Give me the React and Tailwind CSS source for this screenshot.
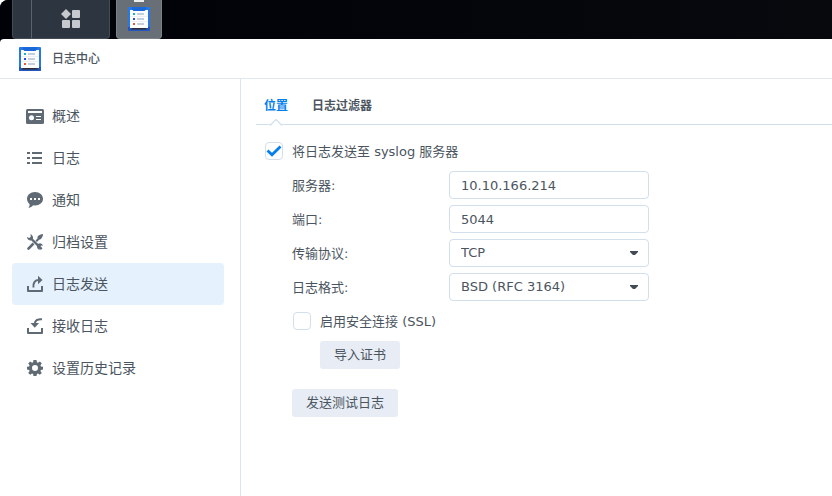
import { useState } from "react";

const navItems = [
  { id: "overview", label: "概述", Icon: OverviewIcon },
  { id: "logs", label: "日志", Icon: ListIcon },
  { id: "notification", label: "通知", Icon: ChatIcon },
  { id: "archive", label: "归档设置", Icon: ToolsIcon },
  { id: "sending", label: "日志发送", Icon: SendIcon },
  { id: "receiving", label: "接收日志", Icon: ReceiveIcon },
  { id: "history", label: "设置历史记录", Icon: GearIcon },
];

const tabs = [
  { id: "location", label: "位置" },
  { id: "filter", label: "日志过滤器" },
];

const fieldClass =
  "h-7 w-full rounded border border-[#d3dfea] bg-white px-[11px] text-[13px] text-[#4b5560] outline-none focus:border-[#057feb]";

function LogCenterIcon() {
  return (
    <svg className="h-6 w-[22px]" viewBox="0 0 22 24" aria-hidden="true">
      <rect width="22" height="24" rx="1" fill="#2478ea" />
      <path d="M0 20h22v3a1 1 0 0 1-1 1H1a1 1 0 0 1-1-1z" fill="#2456bd" />
      <rect x="2" y="3" width="18" height="18" fill="#fff" />
      <path d="M4 0h14v2.500l-1.500 1.500h-11L4 2.500z" fill="#1b68d8" />
      <path d="M4 21h14l1 1.500H3z" fill="#2c3036" />
      <path d="M2 9.500h18M2 14.500h18" stroke="#eef2f6" />
      <rect x="5" y="6" width="2" height="2" fill="#10b5c9" />
      <rect x="5" y="11" width="2" height="2" fill="#2f49ec" />
      <rect x="5" y="16" width="2" height="2" fill="#f2572b" />
      <path d="M9 7h7M9 12h7M9 17h7" stroke="#c4cfdd" strokeWidth="2" />
    </svg>
  );
}

function AppGridIcon() {
  return (
    <svg className="h-5 w-5" viewBox="0 0 20 20" fill="#c5c8cc" aria-hidden="true">
      <path d="M5 0l5 5-5 5-5-5z" />
      <rect x="11" y="1" width="8" height="8" rx="1" />
      <rect x="1" y="11" width="8" height="8" rx="1" />
      <rect x="11" y="11" width="8" height="8" rx="1" />
    </svg>
  );
}

function NavIcon({ children }) {
  return (
    <svg className="h-[18px] w-[18px] shrink-0 text-[#5f6a75]" viewBox="0 0 18 18" fill="currentColor" aria-hidden="true">
      {children}
    </svg>
  );
}

function OverviewIcon() {
  return (
    <NavIcon>
      <rect y="2" width="18" height="15" rx="1.500" />
      <g fill="#fff">
        <rect x="2" y="4" width="14" height="2" />
        <circle cx="5.500" cy="10.700" r="2.500" />
        <rect x="10" y="9" width="5" height="1" />
        <rect x="10" y="12" width="5" height="1" />
      </g>
    </NavIcon>
  );
}

function ListIcon() {
  return (
    <NavIcon>
      <path d="M1 3h3v2H1zM6 3h10v2H6zM1 8h3v2H1zM6 8h10v2H6zM1 13h3v2H1zM6 13h10v2H6z" />
    </NavIcon>
  );
}

function ChatIcon() {
  return (
    <NavIcon>
      <path d="M9 1c4.600 0 8 3 8 6.800s-3.400 6.700-8 6.700c-.7 0-1.300 0-1.900-.2C6 15.800 4.500 16.700 2.500 16.900c.8-1.100 1.200-2.400 1.100-3.700C2 12 1 10 1 7.800 1 4 4.400 1 9 1z" />
      <g fill="#fff">
        <rect x="4" y="7" width="2" height="2" />
        <rect x="8" y="7" width="2" height="2" />
        <rect x="12" y="7" width="2" height="2" />
      </g>
    </NavIcon>
  );
}

function ToolsIcon() {
  return (
    <NavIcon>
      <path d="M4.300 1.200a3.600 3.600 0 0 1 2.600 4.600l9.600 9.400-1.600 1.700-9.500-9.500A3.600 3.600 0 0 1 1 3.900l2.300 1.200 1.600-1.600z" />
      <path d="M11.500 3.800C13 2 15 1 17 1c0 2-1 4.200-2.800 5.600l-1.200.2-2 2.100-1.500-1.500 2-1.900z" />
      <path d="M6.600 9.600l1.800 1.800-5 5.100a1.300 1.300 0 0 1-1.900-1.800z" />
      <path d="M11.500 11l2.600-.8a3.500 3.500 0 0 1 2.900 2.600l-1.800-.3-1.700 1.700.4 2.600a3.500 3.500 0 0 1-2.900-3.300z" />
    </NavIcon>
  );
}

function SendIcon() {
  return (
    <NavIcon>
      <path d="M2 11v5h14v-5" fill="none" stroke="currentColor" strokeWidth="2" strokeLinejoin="round" />
      <path d="M12 .7L16.500 5 12 9.300z" />
      <path d="M7.500 12.500C7 7.500 9 5 13 5" fill="none" stroke="currentColor" strokeWidth="2" />
    </NavIcon>
  );
}

function ReceiveIcon() {
  return (
    <NavIcon>
      <path d="M2 11v5h14v-5" fill="none" stroke="currentColor" strokeWidth="2" strokeLinejoin="round" />
      <path d="M4.500 6h8.500L8.800 10.700z" />
      <path d="M16 2.200c-4.500-.3-7.200 1.300-7.200 5" fill="none" stroke="currentColor" strokeWidth="2" />
    </NavIcon>
  );
}

function GearIcon() {
  return (
    <NavIcon>
      <path
        fillRule="evenodd"
        d="M7.500 1h3l.4 2.200 1.100.5L13.900 2.400 15.800 4.400l-1.400 1.800.5 1.200 2.100.3v2.800l-2.100.4-.5 1.100 1.400 1.900-2 1.900-1.800-1.300-1.100.4-.4 2.100h-3l-.4-2.100-1.100-.4-1.800 1.300-2-1.900 1.400-1.900-.5-1.100L1 10.500V7.700l2.100-.3.500-1.200L2.200 4.400l2-2L6 3.700l1.100-.5zM9 6a3 3 0 1 0 0 6 3 3 0 0 0 0-6z"
      />
    </NavIcon>
  );
}

function Checkbox({ id, label, checked, onChange }) {
  return (
    <div className="flex h-7 items-center gap-[9px]">
      <span className="relative ml-px flex h-[18px] w-[18px]">
        <input
          id={id}
          type="checkbox"
          checked={checked}
          onChange={(e) => onChange(e.target.checked)}
          className="h-[18px] w-[18px] appearance-none rounded border border-[#d3dfea] bg-white"
        />
        {checked && (
          <svg className="pointer-events-none absolute inset-0 h-[18px] w-[18px]" viewBox="0 0 18 18" aria-hidden="true">
            <path d="M2.500 8.500l4.500 4.300 8.500-8.300" fill="none" stroke="#057feb" strokeWidth="2.800" />
          </svg>
        )}
      </span>
      <label htmlFor={id} className="pt-px">
        {label}
      </label>
    </div>
  );
}

function FormRow({ id, label, children }) {
  return (
    <div className="flex h-7 items-center">
      <label htmlFor={id} className="w-[157px] shrink-0 pt-px">
        {label}
      </label>
      <div className="w-[200px]">{children}</div>
    </div>
  );
}

function SelectField({ id, options }) {
  return (
    <div className="relative">
      <select id={id} className={`${fieldClass} block appearance-none`}>
        {options.map((option) => (
          <option key={option}>{option}</option>
        ))}
      </select>
      <svg className="pointer-events-none absolute right-[11px] top-3 h-1 w-2" viewBox="0 0 8 4" fill="#414b55" aria-hidden="true">
        <path d="M0 0h8v1L5 4H3L0 1z" />
      </svg>
    </div>
  );
}

function Button({ children }) {
  return (
    <button type="button" className="h-7 rounded-[3px] bg-[#e8edf5] px-3.5 hover:bg-[#dde5f0]">
      {children}
    </button>
  );
}

function Taskbar() {
  return (
    <div className="flex h-[39px] gap-1.5 rounded-tl-lg bg-linear-to-r from-[#010208] to-[#07090d] pl-3">
      <button
        type="button"
        aria-label="主菜单"
        className="flex w-[98px] rounded-b-sm border-x border-b border-[#434b55] bg-[#2d3540]"
      >
        <span className="h-full w-[19px] border-r border-[#5a626c]" />
        <span className="flex h-full flex-1 items-center justify-center">
          <AppGridIcon />
        </span>
      </button>
      <button
        type="button"
        aria-label="日志中心"
        className="relative flex w-[46px] items-center justify-center rounded-b-sm border-x border-b border-[#7d8288] bg-[#696f76]"
      >
        <span className="absolute left-[17px] top-0 h-0.5 w-2.5 bg-[#eceded]" />
        <LogCenterIcon />
      </button>
    </div>
  );
}

function SendingForm() {
  const [sendLogs, setSendLogs] = useState(true);
  const [ssl, setSsl] = useState(false);
  const [server, setServer] = useState("10.10.166.214");
  const [port, setPort] = useState("5044");

  return (
    <form className="flex flex-col gap-1.5 pl-2 pt-3">
      <Checkbox id="send-logs" label="将日志发送至 syslog 服务器" checked={sendLogs} onChange={setSendLogs} />
      <div className="flex flex-col gap-1.5 pl-7">
        <FormRow id="server" label="服务器:">
          <input id="server" className={`${fieldClass} block`} value={server} onChange={(e) => setServer(e.target.value)} />
        </FormRow>
        <FormRow id="port" label="端口:">
          <input id="port" className={`${fieldClass} block`} value={port} onChange={(e) => setPort(e.target.value)} />
        </FormRow>
        <FormRow id="protocol" label="传输协议:">
          <SelectField id="protocol" options={["TCP", "UDP"]} />
        </FormRow>
        <FormRow id="format" label="日志格式:">
          <SelectField id="format" options={["BSD (RFC 3164)", "IETF (RFC 5424)"]} />
        </FormRow>
        <Checkbox id="ssl" label="启用安全连接 (SSL)" checked={ssl} onChange={setSsl} />
        <div className="pl-7">
          <Button>导入证书</Button>
        </div>
        <div className="pt-3.5">
          <Button>发送测试日志</Button>
        </div>
      </div>
    </form>
  );
}

function App() {
  const [activeNav, setActiveNav] = useState("sending");
  const [activeTab, setActiveTab] = useState("location");

  return (
    <div className="flex min-h-screen flex-col rounded-tl-lg bg-[#010208] font-['DejaVu_Sans','Noto_Sans_CJK_SC',sans-serif] text-[13px] leading-5 text-[#4b5560]">
      <Taskbar />
      <div className="flex flex-1 flex-col rounded-tl bg-white">
        <header className="flex h-10 items-center gap-[11px] border-b border-[#dfe7ef] pl-[19px]">
          <LogCenterIcon />
          <h1 className="text-xs font-medium">日志中心</h1>
        </header>
        <div className="flex flex-1">
          <nav className="w-[241px] shrink-0 border-r border-[#d9e5f0] py-4 pl-3 pr-4">
            {navItems.map(({ id, label, Icon }) => (
              <button
                key={id}
                type="button"
                onClick={() => setActiveNav(id)}
                className={`flex h-[42px] w-full items-center gap-2 rounded px-3.5 text-sm ${
                  activeNav === id ? "bg-[#e5f1fd]" : ""
                }`}
              >
                <Icon />
                {label}
              </button>
            ))}
          </nav>
          <main className="min-w-0 flex-1 pl-[15px]">
            <div role="tablist" className="flex h-[46px] gap-6 border-b border-[#d3e0ec] pl-2 pt-[17px]">
              {tabs.map((tab) => (
                <button
                  key={tab.id}
                  type="button"
                  role="tab"
                  aria-selected={activeTab === tab.id}
                  onClick={() => setActiveTab(tab.id)}
                  className={`relative flex h-[29px] items-start text-xs leading-5 font-bold ${
                    activeTab === tab.id ? "text-[#057feb]" : ""
                  }`}
                >
                  {tab.label}
                  {activeTab === tab.id && (
                    <svg className="absolute -bottom-px left-1/2 h-[7px] w-3 -translate-x-1/2" viewBox="0 0 12 7" aria-hidden="true">
                      <path d="M0 7h12L6 1z" fill="#fff" />
                      <path d="M0 6.500l6-6 6 6" fill="none" stroke="#d3e0ec" strokeWidth="1.200" />
                    </svg>
                  )}
                </button>
              ))}
            </div>
            <SendingForm />
          </main>
        </div>
      </div>
    </div>
  );
}

export default App;
